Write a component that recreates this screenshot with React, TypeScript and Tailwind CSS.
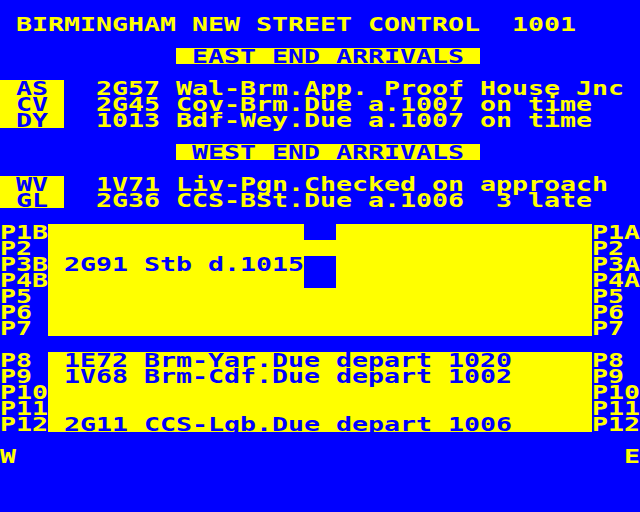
import type { ReactNode } from "react";

// BBC-style 40x32 character screen, every cell 16x16
const YEL = "bg-[#ffff00] text-[#0000ff]";

function Row({ children }: { children?: ReactNode }) {
  return <div className="flex h-4 w-full">{children}</div>;
}

function T({ s = "", w = "flex-1", y = false }: { s?: string; w?: string; y?: boolean }) {
  return (
    <div className={`${w} h-4 shrink-0 ${y ? YEL : "text-[#ffff00]"}`}>
      <span className="block origin-left scale-x-[1.3988] whitespace-pre text-[19px] leading-4">{s}</span>
    </div>
  );
}

function Plat({ l, r, s = "", notch = false }: { l: string; r: string; s?: string; notch?: boolean }) {
  return (
    <Row>
      <T s={l} w="w-12" />
      {notch ? (
        <>
          <T s={s} w="w-64" y />
          <T w="w-8" />
          <T w="w-64" y />
        </>
      ) : (
        <T s={s} w="w-136" y />
      )}
      <T s={r} w="w-12" />
    </Row>
  );
}

function Bar({ s }: { s: string }) {
  return (
    <Row>
      <T w="w-44" />
      <T s={s} w="w-76" y />
    </Row>
  );
}

function Arr({ code, s }: { code: string; s: string }) {
  return (
    <Row>
      <T s={code} w="w-16" y />
      <T s={s} />
    </Row>
  );
}

export default function App() {
  return (
    <div className="w-[640px] h-[512px] overflow-hidden bg-[#0000ff] font-['DejaVu_Sans_Mono',monospace] font-bold">
      <Row />
      <Row>
        <T s=" BIRMINGHAM NEW STREET CONTROL  1001" />
      </Row>
      <Row />
      <Bar s=" EAST END ARRIVALS " />
      <Row />
      <Arr code=" AS " s="  2G57 Wal-Brm.App. Proof House Jnc" />
      <Arr code=" CV " s="  2G45 Cov-Brm.Due a.1007 on time" />
      <Arr code=" DY " s="  1013 Bdf-Wey.Due a.1007 on time" />
      <Row />
      <Bar s=" WEST END ARRIVALS " />
      <Row />
      <Arr code=" WV " s="  1V71 Liv-Pgn.Checked on approach" />
      <Arr code=" GL " s="  2G36 CCS-BSt.Due a.1006  3 late" />
      <Row />
      <Plat l="P1B" r="P1A" notch />
      <Plat l="P2" r="P2" />
      <Plat l="P3B" r="P3A" s=" 2G91 Stb d.1015" notch />
      <Plat l="P4B" r="P4A" notch />
      <Plat l="P5" r="P5" />
      <Plat l="P6" r="P6" />
      <Plat l="P7" r="P7" />
      <Row />
      <Plat l="P8" r="P8" s=" 1E72 Brm-Yar.Due depart 1020" />
      <Plat l="P9" r="P9" s=" 1V68 Brm-Cdf.Due depart 1002" />
      <Plat l="P10" r="P10" />
      <Plat l="P11" r="P11" />
      <Plat l="P12" r="P12" s=" 2G11 CCS-Lgb.Due depart 1006" />
      <Row />
      <Row>
        <T s="W" />
        <T s="E" w="w-4" />
      </Row>
    </div>
  );
}
